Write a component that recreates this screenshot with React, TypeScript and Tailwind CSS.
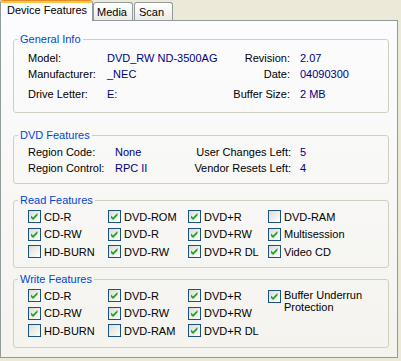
import React from 'react';

const Check = ({ checked }: { checked: boolean }) => (
  <span className="w-[13px] h-[13px] shrink-0 border border-[#1C5180] bg-linear-to-br from-[#DCDCD7] to-[#FFFFFF] flex">
    {checked && (
      <svg width="11" height="11" viewBox="0 0 11 11">
        <path d="M2 4.5 L4 6.5 L8.5 2 L8.5 4.5 L4 9 L2 7 Z" fill="#21A121" />
      </svg>
    )}
  </span>
);

type Item = { label: string; on: boolean };

const Column = ({ items }: { items: Item[] }) => (
  <div className="w-[80px] flex flex-col shrink-0">
    {items.map((it) => (
      <div key={it.label} className="h-[17.5px] flex items-center gap-[3px] whitespace-nowrap">
        <Check checked={it.on} />
        <span>{it.label}</span>
      </div>
    ))}
  </div>
);

const readCols: Item[][] = [
  [
    { label: 'CD-R', on: true },
    { label: 'CD-RW', on: true },
    { label: 'HD-BURN', on: false },
  ],
  [
    { label: 'DVD-ROM', on: true },
    { label: 'DVD-R', on: true },
    { label: 'DVD-RW', on: true },
  ],
  [
    { label: 'DVD+R', on: true },
    { label: 'DVD+RW', on: true },
    { label: 'DVD+R DL', on: true },
  ],
  [
    { label: 'DVD-RAM', on: false },
    { label: 'Multisession', on: true },
    { label: 'Video CD', on: true },
  ],
];

const writeCols: Item[][] = [
  [
    { label: 'CD-R', on: true },
    { label: 'CD-RW', on: true },
    { label: 'HD-BURN', on: false },
  ],
  [
    { label: 'DVD-R', on: true },
    { label: 'DVD-RW', on: true },
    { label: 'DVD-RAM', on: false },
  ],
  [
    { label: 'DVD+R', on: true },
    { label: 'DVD+RW', on: true },
    { label: 'DVD+R DL', on: true },
  ],
];

export default function App() {
  return (
    <div className="w-[401px] h-[361px] bg-[#ECE9D8] font-['Liberation_Sans',Arial,sans-serif] text-[11px] text-black">
      {/* tabs */}
      <div className="flex items-end h-[20px] relative z-10">
        <div className="w-[93px] h-[21px] -mb-px bg-[#FCFCFE] border-x border-[#919B9C] rounded-t-[3px] flex flex-col overflow-hidden">
          <div className="h-px bg-[#E68B2C]" />
          <div className="h-[2px] bg-[#FFC83C]" />
          <div className="h-[14px] leading-[14px] pl-[6px]">Device Features</div>
        </div>
        <div className="w-[40px] h-[18px] border-t border-x border-[#919B9C] rounded-t-[3px] bg-linear-to-b from-[#FFFFFF] to-[#ECEBE6] pl-[3px] leading-[16px] pt-px">
          Media
        </div>
        <div className="w-[39px] h-[18px] ml-px border-t border-x border-[#919B9C] rounded-t-[3px] bg-linear-to-b from-[#FFFFFF] to-[#ECEBE6] pl-[4px] leading-[16px] pt-px">
          Scan
        </div>
      </div>

      {/* page */}
      <div className="w-[398px] h-[338px] border border-[#919B9C] bg-linear-to-b from-[#FCFCFE] to-[#F4F3EE] pl-[12px] pt-[12px] flex flex-col">
        {/* General Info */}
        <fieldset className="w-[376px] h-[80px] border border-[#D0D0BF] rounded-[3px]">
          <legend className="ml-[4px] px-[2px] leading-[13px] text-[#0046D5]">General Info</legend>
          <div className="pt-[4px] pl-[14px] whitespace-nowrap">
            <div className="flex h-[16px] items-center">
              <span className="w-[79px] shrink-0">Model:</span>
              <span className="w-[103px] shrink-0 text-[#000080]">DVD_RW ND-3500AG</span>
              <span className="w-[80px] shrink-0 text-right">Revision:</span>
              <span className="ml-[10px] text-[#000080]">2.07</span>
            </div>
            <div className="flex h-[16px] items-center">
              <span className="w-[79px] shrink-0">Manufacturer:</span>
              <span className="w-[103px] shrink-0 text-[#000080]">_NEC</span>
              <span className="w-[80px] shrink-0 text-right">Date:</span>
              <span className="ml-[10px] text-[#000080]">04090300</span>
            </div>
            <div className="flex h-[16px] items-center mt-[4px]">
              <span className="w-[79px] shrink-0">Drive Letter:</span>
              <span className="w-[103px] shrink-0 text-[#000080]">E:</span>
              <span className="w-[80px] shrink-0 text-right">Buffer Size:</span>
              <span className="ml-[10px] text-[#000080]">2 MB</span>
            </div>
          </div>
        </fieldset>

        {/* DVD Features */}
        <fieldset className="w-[376px] h-[55px] mt-[16px] border border-[#D0D0BF] rounded-[3px]">
          <legend className="ml-[4px] px-[2px] leading-[13px] text-[#0046D5]">DVD Features</legend>
          <div className="pt-[2px] pl-[14px] whitespace-nowrap">
            <div className="flex h-[16px] items-center">
              <span className="w-[87px] shrink-0">Region Code:</span>
              <span className="w-[76px] shrink-0 text-[#000080]">None</span>
              <span className="w-[100px] shrink-0 text-right">User Changes Left:</span>
              <span className="ml-[9px] text-[#000080]">5</span>
            </div>
            <div className="flex h-[16px] items-center">
              <span className="w-[87px] shrink-0">Region Control:</span>
              <span className="w-[76px] shrink-0 text-[#000080]">RPC II</span>
              <span className="w-[100px] shrink-0 text-right">Vendor Resets Left:</span>
              <span className="ml-[9px] text-[#000080]">4</span>
            </div>
          </div>
        </fieldset>

        {/* Read Features */}
        <fieldset className="w-[376px] h-[74px] mt-[10px] border border-[#D0D0BF] rounded-[3px]">
          <legend className="ml-[4px] px-[2px] leading-[13px] text-[#0046D5]">Read Features</legend>
          <div className="flex pt-[1px] pl-[14px]">
            {readCols.map((col, i) => (
              <Column key={i} items={col} />
            ))}
          </div>
        </fieldset>

        {/* Write Features */}
        <fieldset className="w-[376px] h-[75px] mt-[5px] border border-[#D0D0BF] rounded-[3px]">
          <legend className="ml-[4px] px-[2px] leading-[13px] text-[#0046D5]">Write Features</legend>
          <div className="flex pt-[1px] pl-[14px]">
            {writeCols.map((col, i) => (
              <Column key={i} items={col} />
            ))}
            <div className="flex items-start gap-[3px] pt-[3px]">
              <Check checked />
              <span className="leading-[12px] -mt-px">
                Buffer Underrun
                <br />
                Protection
              </span>
            </div>
          </div>
        </fieldset>
      </div>
    </div>
  );
}
